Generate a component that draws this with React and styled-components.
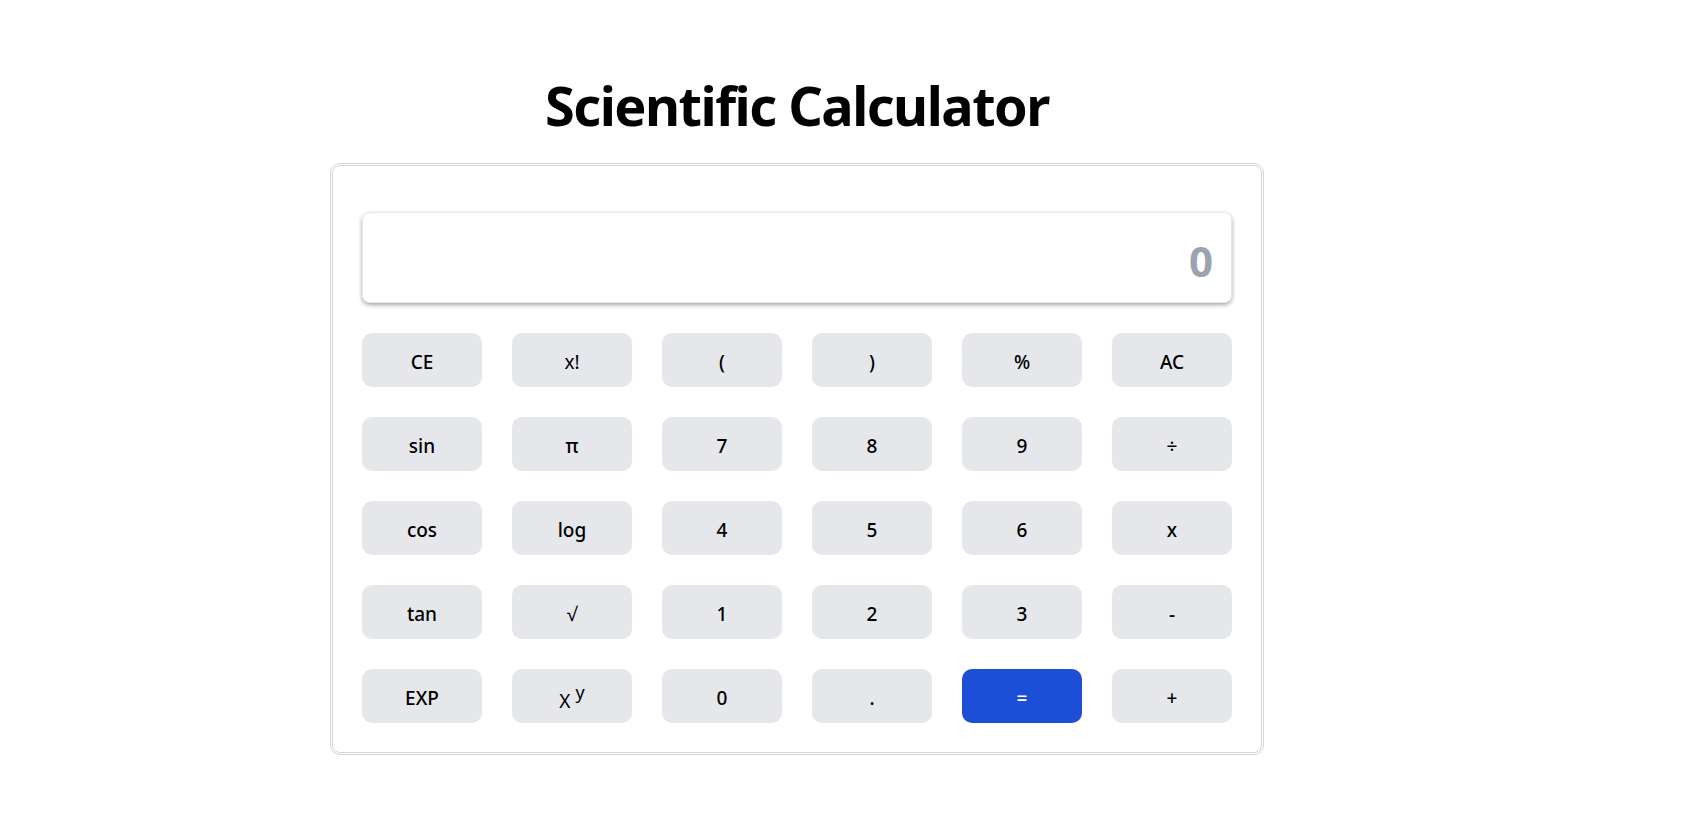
import React, { useState } from "react";
import styled, { createGlobalStyle } from "styled-components";

const GlobalStyle = createGlobalStyle`
  body {
    margin: 0;
    background: #ffffff;
    font-family: "Noto Sans", "Open Sans", sans-serif;
    color: #000000;
  }
`;

const Page = styled.div`
  display: flex;
  flex-direction: column;
  align-items: center;
  width: 1594px;
  padding-top: 75px;
  box-sizing: border-box;
`;

const Title = styled.h1`
  margin: 0 0 28px;
  font-size: 54px;
  line-height: 60px;
  font-weight: 700;
  letter-spacing: -1.5px;
`;

const Card = styled.div`
  width: 934px;
  box-sizing: border-box;
  border: 3px double #d1d5db;
  border-radius: 10px;
  padding: 46px 29px 29px;
`;

const Display = styled.div`
  height: 91px;
  box-sizing: border-box;
  margin-bottom: 30px;
  border: 1px solid #e5e7eb;
  border-radius: 8px;
  box-shadow: 0 2px 4px rgba(0, 0, 0, 0.35);
  display: flex;
  align-items: center;
  justify-content: flex-end;
  padding: 6px 18px 0;
  font-size: 42px;
  font-weight: 700;
  color: #9ca3af;
`;

const Keypad = styled.div`
  display: grid;
  grid-template-columns: repeat(6, 120px);
  grid-auto-rows: 54px;
  gap: 30px;
`;

const Key = styled.button`
  border: none;
  border-radius: 10px;
  padding: 4px 0 0;
  font-family: inherit;
  font-size: 19px;
  font-weight: ${({ $light }) => ($light ? 400 : 500)};
  background-color: ${({ $primary }) => ($primary ? "#1d4ed8" : "#e5e7eb")};
  color: ${({ $primary }) => ($primary ? "#ffffff" : "#000000")};
  cursor: pointer;
`;

const Sup = styled.sup`
  font-size: 18px;
  margin-left: 5px;
  position: relative;
  top: -2px;
`;

const keys = [
  "CE", "x!", "(", ")", "%", "AC",
  "sin", "π", "7", "8", "9", "÷",
  "cos", "log", "4", "5", "6", "x",
  "tan", "√", "1", "2", "3", "-",
  "EXP", "pow", "0", ".", "=", "+",
];

const App = () => {
  const [value, setValue] = useState("0");

  const press = (k) => {
    if (k === "AC") return setValue("0");
    if (k === "CE") return setValue((v) => (v.length > 1 ? v.slice(0, -1) : "0"));
    if (k === "=") return;
    setValue((v) => (v === "0" ? k : v + k));
  };

  return (
    <Page>
      <GlobalStyle />
      <Title>Scientific Calculator</Title>
      <Card>
        <Display>{value}</Display>
        <Keypad>
          {keys.map((k) =>
            k === "pow" ? (
              <Key key={k} $light onClick={() => press("^")}>
                X<Sup>y</Sup>
              </Key>
            ) : (
              <Key
                key={k}
                $primary={k === "="}
                $light={k === "√" || k === "x!"}
                onClick={() => press(k)}
              >
                {k}
              </Key>
            )
          )}
        </Keypad>
      </Card>
    </Page>
  );
};

export default App;
